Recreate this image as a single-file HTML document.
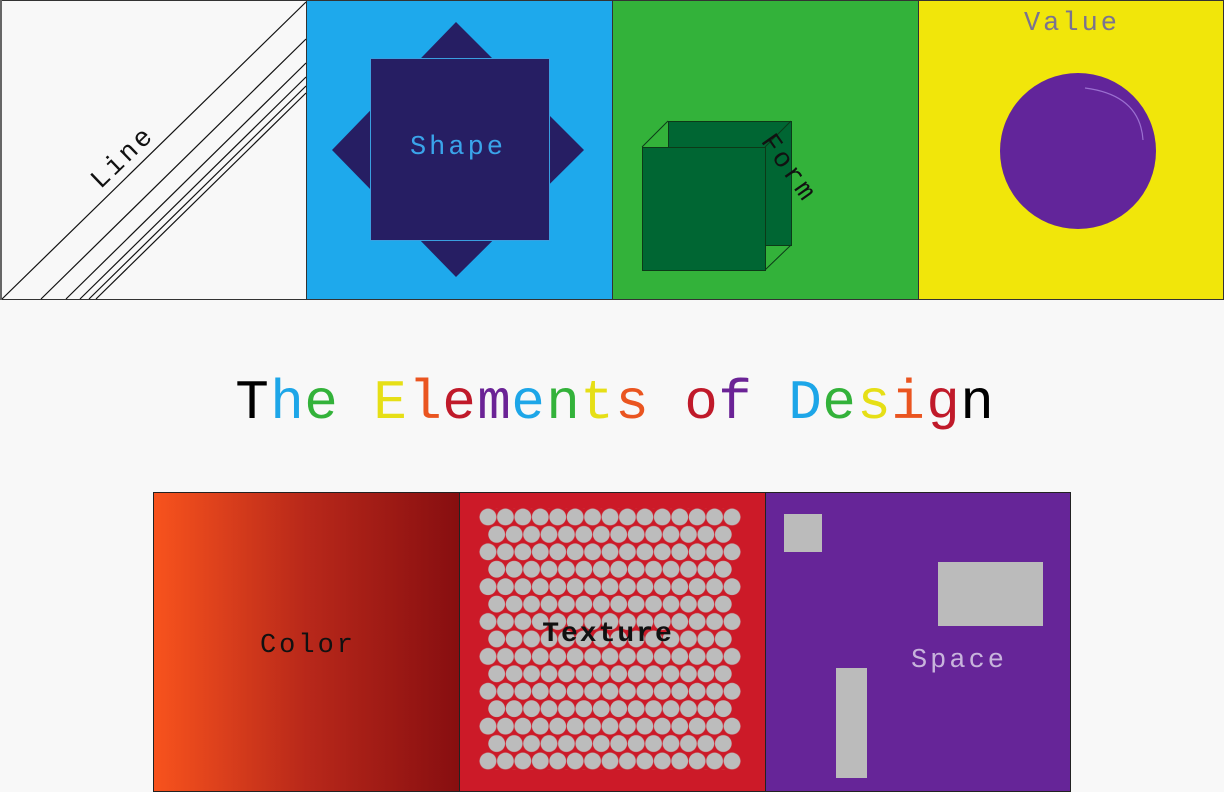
<!DOCTYPE html>
<html><head><meta charset="utf-8"><style>
html,body{margin:0;padding:0;background:#f8f8f8;}
svg{display:block;}
text{font-family:"Liberation Mono","DejaVu Sans Mono",monospace;}
</style></head><body>
<svg width="1224" height="792" viewBox="0 0 1224 792" xmlns="http://www.w3.org/2000/svg">
<defs>
<linearGradient id="cg" x1="0" y1="0" x2="1" y2="0">
<stop offset="0" stop-color="#f8531d"/><stop offset="0.5" stop-color="#b8281a"/><stop offset="1" stop-color="#870e10"/>
</linearGradient>
<pattern id="pa" x="479.3" y="508.3" width="17.43" height="34.86" patternUnits="userSpaceOnUse">
<circle cx="8.7" cy="8.7" r="8.4" fill="#bcbcbc"/>
</pattern>
<pattern id="pb" x="488" y="508.3" width="17.43" height="34.86" patternUnits="userSpaceOnUse">
<circle cx="8.7" cy="26.1" r="8.4" fill="#bcbcbc"/>
</pattern>
</defs>
<rect width="1224" height="792" fill="#f8f8f8"/>

<!-- Line -->
<rect x="0.5" y="0.5" width="306" height="299" fill="#f8f8f8" stroke="#333"/>
<rect x="0" y="0" width="2" height="300" fill="#666"/>
<g stroke="#111" stroke-width="1.2" fill="none">
<line x1="2" y1="299" x2="306" y2="2"/>
<line x1="41" y1="299" x2="306" y2="39"/>
<line x1="66" y1="299" x2="306" y2="63"/>
<line x1="80" y1="299" x2="306" y2="77"/>
<line x1="89" y1="299" x2="306" y2="86"/>
<line x1="96" y1="299" x2="306" y2="93"/>
</g>
<text x="128" y="163" font-size="27" letter-spacing="3" fill="#111" text-anchor="middle" transform="rotate(-44 128 163)">Line</text>

<!-- Shape -->
<rect x="306.5" y="0.5" width="306" height="299" fill="#1ea9ec" stroke="#333"/>
<polygon points="456,22 584,150 456,277 332,150" fill="#261e63"/>
<rect x="370.5" y="58.5" width="179" height="182" fill="#261e63" stroke="#3a9fe0"/>
<text x="458" y="154" font-size="27" letter-spacing="3" fill="#3aa4ea" text-anchor="middle">Shape</text>

<!-- Form -->
<rect x="612.5" y="0.5" width="306" height="299" fill="#33b23a" stroke="#333"/>
<rect x="668.5" y="121.5" width="123" height="124" fill="#006633" stroke="#0c3a18"/>
<g stroke="#0c3a18" fill="none"><line x1="642" y1="147" x2="668" y2="121"/><line x1="765" y1="147" x2="791" y2="121"/><line x1="765" y1="270" x2="791" y2="245"/></g>
<rect x="642.5" y="147.5" width="123" height="123" fill="#006633" stroke="#0c3a18"/>
<text x="789" y="176" font-size="27" letter-spacing="3" fill="#111" text-anchor="middle" transform="rotate(55 789 168)">Form</text>

<!-- Value -->
<rect x="918.5" y="0.5" width="305" height="299" fill="#f1e60a" stroke="#333"/>
<ellipse cx="1078" cy="151" rx="78" ry="78" fill="#62259a"/>
<path d="M1085 88 Q1140 95 1143 140" stroke="#9a6fd0" stroke-width="1.2" fill="none"/>
<text x="1072" y="30" font-size="27" letter-spacing="3" fill="#7a7390" text-anchor="middle">Value</text>

<!-- Title -->
<g font-size="56" text-anchor="middle">
<text x="252" y="418" fill="#000">T</text>
<text x="287" y="418" fill="#1da6e8">h</text>
<text x="321" y="418" fill="#33b23a">e</text>
<text x="390" y="418" fill="#e6df16">E</text>
<text x="425" y="418" fill="#ea5520">l</text>
<text x="459" y="418" fill="#c01a2a">e</text>
<text x="494" y="418" fill="#6b2396">m</text>
<text x="528" y="418" fill="#1da6e8">e</text>
<text x="563" y="418" fill="#33b23a">n</text>
<text x="597" y="418" fill="#e6df16">t</text>
<text x="632" y="418" fill="#ea5520">s</text>
<text x="701" y="418" fill="#c01a2a">o</text>
<text x="735" y="418" fill="#6b2396">f</text>
<text x="805" y="418" fill="#1da6e8">D</text>
<text x="839" y="418" fill="#33b23a">e</text>
<text x="874" y="418" fill="#e6df16">s</text>
<text x="908" y="418" fill="#ea5520">i</text>
<text x="943" y="418" fill="#c01a2a">g</text>
<text x="977" y="418" fill="#000">n</text>
</g>

<!-- Color -->
<rect x="153.5" y="492.5" width="306" height="299" fill="url(#cg)" stroke="#222"/>
<text x="308" y="652" font-size="27" letter-spacing="3" fill="#111" text-anchor="middle">Color</text>

<!-- Texture -->
<rect x="459.5" y="492.5" width="306" height="299" fill="#cc1a28" stroke="#222"/>
<rect x="479" y="508" width="262" height="262" fill="url(#pa)"/>
<rect x="488" y="508" width="244" height="262" fill="url(#pb)"/>
<text x="608" y="641" font-size="28" letter-spacing="2" font-weight="bold" fill="#111" text-anchor="middle">Texture</text>

<!-- Space -->
<rect x="765.5" y="492.5" width="305" height="299" fill="#662598" stroke="#222"/>
<rect x="784" y="514" width="38" height="38" fill="#bbbbbb"/>
<rect x="938" y="562" width="105" height="64" fill="#bbbbbb"/>
<rect x="836" y="668" width="31" height="110" fill="#bbbbbb"/>
<text x="959" y="667" font-size="27" letter-spacing="3" fill="#c8b4dc" text-anchor="middle">Space</text>
</svg>
</body></html>
